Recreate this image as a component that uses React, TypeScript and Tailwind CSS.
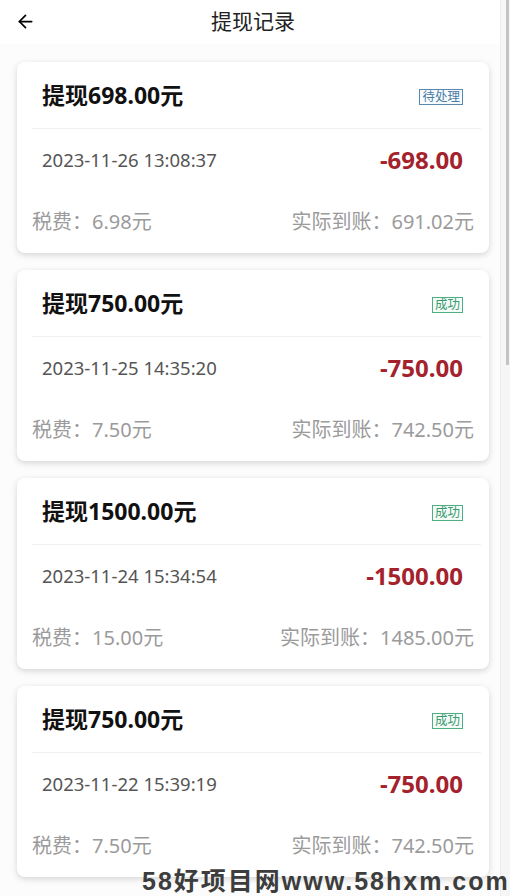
import { ArrowLeft } from 'lucide-react';

type Status = 'pending' | 'success';

interface Record {
    amount: string;
    time: string;
    tax: string;
    received: string;
    status: Status;
}

const records: Record[] = [
    { amount: '698.00', time: '2023-11-26 13:08:37', tax: '6.98', received: '691.02', status: 'pending' },
    { amount: '750.00', time: '2023-11-25 14:35:20', tax: '7.50', received: '742.50', status: 'success' },
    { amount: '1500.00', time: '2023-11-24 15:34:54', tax: '15.00', received: '1485.00', status: 'success' },
    { amount: '750.00', time: '2023-11-22 15:39:19', tax: '7.50', received: '742.50', status: 'success' },
];

function StatusTag({ status }: { status: Status }) {
    if (status === 'pending') {
        return (
            <span className="mt-[4px] px-[2px] h-[16px] flex items-center text-[12.5px] leading-none border border-[#5a88ad] text-[#4b7ba3] bg-[#f7fbfe]">
                待处理
            </span>
        );
    }
    return (
        <span className="mt-[4px] px-[2px] h-[16px] flex items-center text-[12.5px] leading-none border border-[#4fae86] text-[#3a9a70] bg-[#f5fcf8]">
            成功
        </span>
    );
}

function RecordCard({ r }: { r: Record }) {
    return (
        <div className="ml-[17px] w-[472px] h-[191px] bg-white rounded-[8px] shadow-[0_2px_6px_rgba(0,0,0,0.16)] flex flex-col">
            {/* Header */}
            <div className="h-[67px] ml-[15px] mr-[8px] pl-[10px] pr-[18px] border-b border-[#efefef] flex items-center justify-between">
                <span className="text-[23px] font-bold text-[#111]">提现{r.amount}元</span>
                <StatusTag status={r.status} />
            </div>

            {/* Time and amount */}
            <div className="h-[62px] pl-[25px] pr-[26px] flex items-center justify-between">
                <span className="text-[18.5px] text-[#555]">{r.time}</span>
                <span className="text-[24px] font-bold text-[#a3222c]">-{r.amount}</span>
            </div>

            {/* Tax row */}
            <div className="h-[62px] px-[15px] flex items-center justify-between text-[20px] text-[#9b9b9b]">
                <span>税费：{r.tax}元</span>
                <span>实际到账：{r.received}元</span>
            </div>
        </div>
    );
}

export default function App() {
    return (
        <div
            className="relative w-[510px] h-[896px] overflow-hidden bg-[#fcfcfc] flex"
            style={{ fontFamily: '"Noto Sans", "Noto Sans CJK SC", sans-serif' }}
        >
            <div className="w-[500px] flex flex-col">
                {/* Nav bar */}
                <div className="h-[44px] relative flex items-center justify-center bg-white">
                    <ArrowLeft className="absolute left-[15px] top-[11px] w-[21px] h-[21px] text-black" strokeWidth={2} />
                    <span className="text-[21px] text-[#222] ml-[6px]">提现记录</span>
                </div>

                <div className="pt-[18px] flex flex-col gap-[17px]">
                    {records.map((r, i) => (
                        <RecordCard key={i} r={r} />
                    ))}
                </div>
            </div>

            {/* Scrollbar */}
            <div className="w-[10px] h-full bg-[#f6f6f6] border-l border-[#ededed] flex justify-end">
                <div className="w-[3px] h-[365px] mr-[1px] bg-[#c4c4c4]" />
            </div>

            {/* Watermark */}
            <div
                className="absolute left-[142px] top-[869px] text-[25px] leading-none font-bold tracking-[2px] text-[#3d3d3d] whitespace-nowrap"
                style={{ fontFamily: '"Liberation Sans", "Noto Sans CJK SC", sans-serif' }}
            >
                58好项目网www.58hxm.com
            </div>
        </div>
    );
}
